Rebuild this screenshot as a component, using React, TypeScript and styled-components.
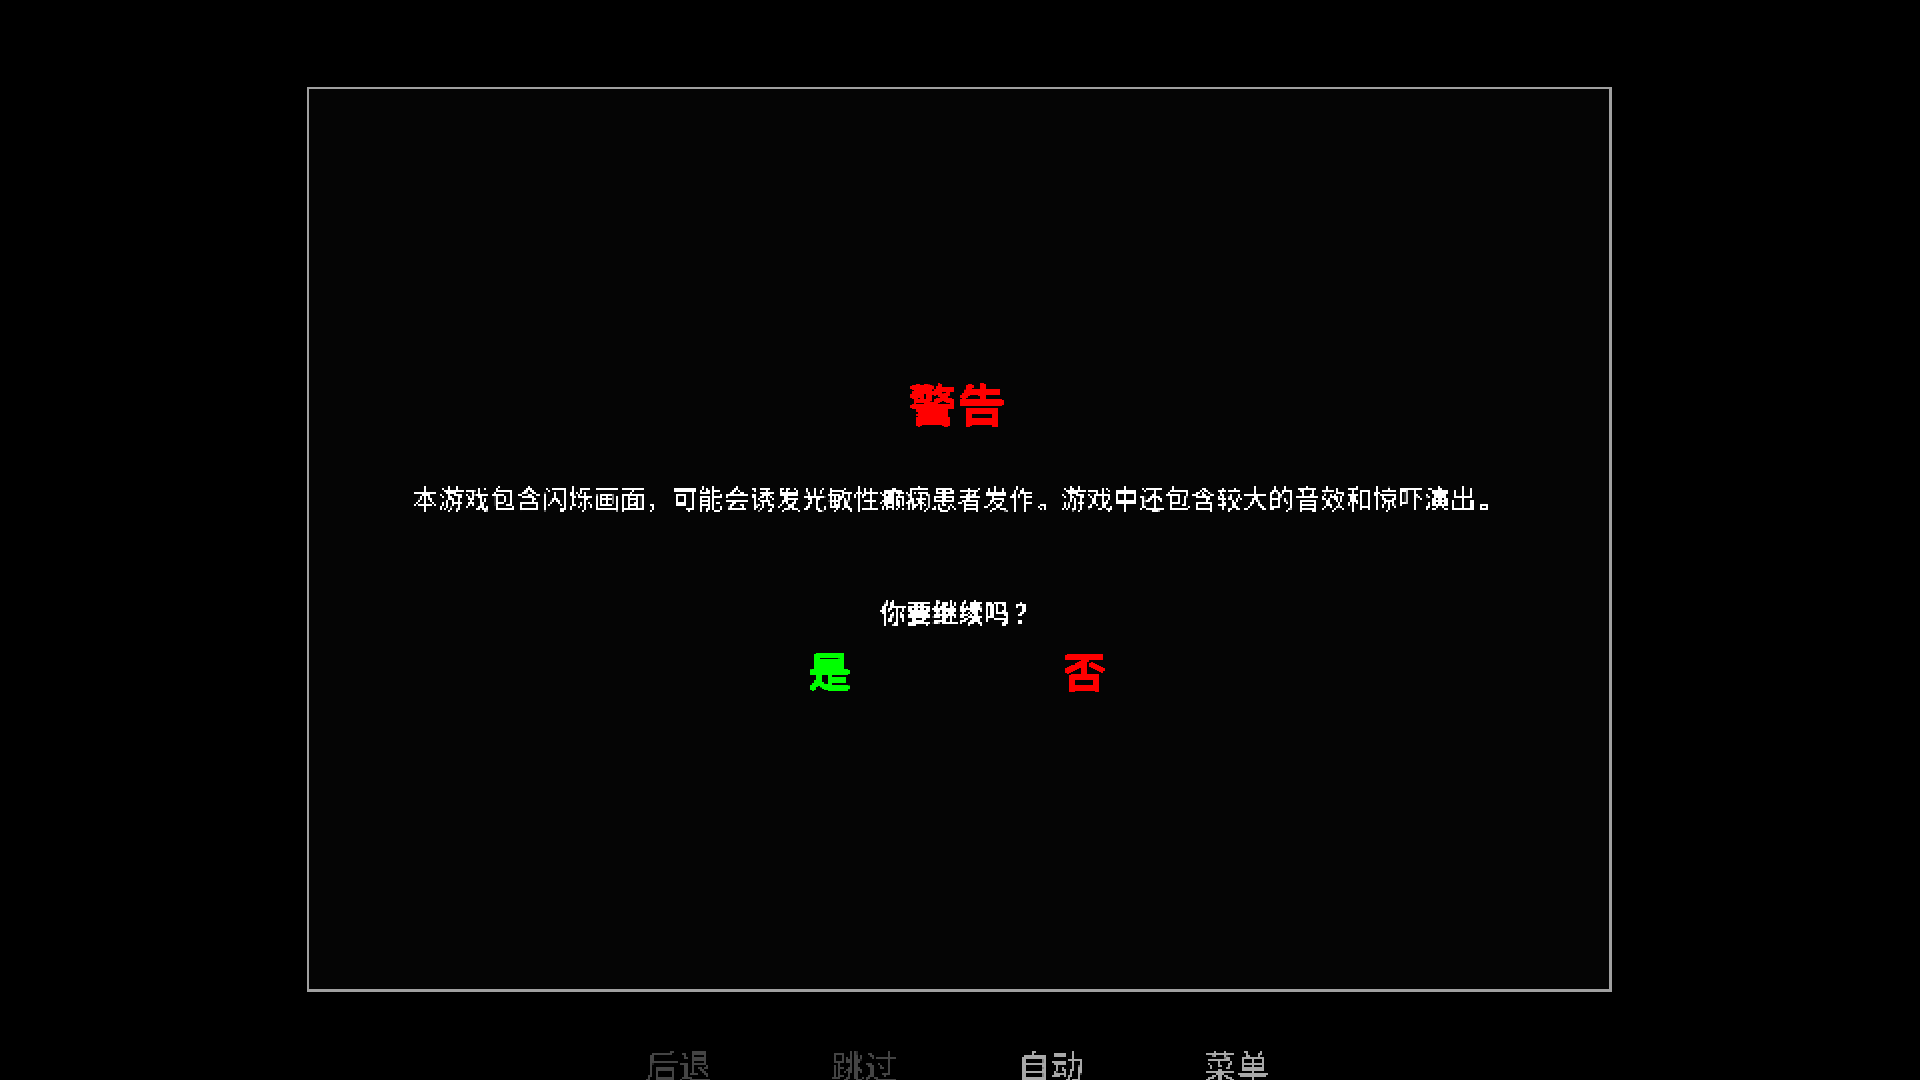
import React from "react";
import styled, { createGlobalStyle } from "styled-components";

const GlobalStyle = createGlobalStyle`
  html, body { margin: 0; padding: 0; background: #000; overflow: hidden; }
  * { box-sizing: border-box; }
`;

const Screen = styled.main`
  width: 1920px;
  height: 1080px;
  padding: 87px 308px 0 307px;
  display: flex;
  flex-direction: column;
  overflow: hidden;
  background: #000;
  font-family: "Noto Sans CJK SC", "Noto Sans", sans-serif;
`;

const Frame = styled.section`
  flex: none;
  height: 905px;
  border: solid #a0a0a0;
  border-width: 2px 3px 3px 2px;
  background: #050505;
  padding: 286px 4px 0 0;
  display: flex;
  flex-direction: column;
  align-items: center;
`;

const Title = styled.h1`
  margin: 0;
  font-size: 49px;
  line-height: 56px;
  height: 56px;
  font-weight: 700;
  color: #f00;
  transform: scaleY(0.9);
  filter: url(#bitmap);
`;

const Message = styled.p`
  margin: 49px 0 0;
  font-size: 26px;
  letter-spacing: -0.06px;
  line-height: 36px;
  font-weight: 400;
  white-space: nowrap;
  color: #fff;
  filter: url(#bitmap);
`;

const Stop = styled.span`
  margin: 0 -3px 0 3px;
  font-weight: 700;
`;

const Prompt = styled.p`
  margin: 78px 0 0;
  padding-left: 2px;
  font-size: 26px;
  line-height: 36px;
  font-weight: 700;
  white-space: nowrap;
  color: #fff;
  filter: url(#bitmap);
`;

const QuestionMark = styled.span`
  margin: 0 -4px 0 4px;
`;

const Choices = styled.div`
  margin-top: 13px;
  display: flex;
  gap: 211px;
`;

const Choice = styled.button<{ $color: string }>`
  width: 44px;
  height: 54px;
  padding: 0;
  border: 0;
  background: none;
  font: 700 44px/54px "Noto Sans CJK SC", "Noto Sans", sans-serif;
  color: ${(p) => p.$color};
  transform: scaleY(0.9);
  filter: url(#bitmap);
`;

const QuickMenu = styled.nav`
  flex: none;
  margin-top: 51px;
  padding-right: 4px;
  display: flex;
  justify-content: center;
  gap: 120px;
`;

const QuickButton = styled.button<{ $muted?: boolean }>`
  width: 66px;
  height: 44px;
  padding: 0;
  border: 0;
  background: none;
  white-space: nowrap;
  font: 400 33px/44px "Noto Sans CJK SC", "Noto Sans", sans-serif;
  color: ${(p) => (p.$muted ? "#444" : "#a8a8a8")};
  filter: url(#bitmap);
`;

const FilterDefs = styled.svg`
  position: absolute;
  width: 0;
  height: 0;
`;

/* Snaps glyph coverage to a 2px grid so type reads as a bitmap font. */
function BitmapFilter({ cutoff }: { cutoff: number }) {
  return (
    <filter
      id="bitmap"
      filterUnits="userSpaceOnUse"
      x="0"
      y="0"
      width="1200"
      height="60"
      colorInterpolationFilters="sRGB"
    >
      <feConvolveMatrix in="SourceGraphic" order={2} kernelMatrix="1 1 1 1" divisor={4} targetX={0} targetY={0} edgeMode="none" result="avg" />
      <feFlood x="0" y="0" width="1" height="1" floodColor="#fff" result="dot" />
      <feOffset in="dot" dx="0" dy="0" x="0" y="0" width="2" height="2" result="unit" />
      <feTile in="unit" result="grid" />
      <feComposite in="avg" in2="grid" operator="in" result="samples" />
      <feComponentTransfer in="samples" result="hard">
        <feFuncA type="linear" slope="40" intercept={-40 * cutoff} />
      </feComponentTransfer>
      <feOffset in="hard" dx="1" dy="0" result="right" />
      <feMerge result="row">
        <feMergeNode in="hard" />
        <feMergeNode in="right" />
      </feMerge>
      <feOffset in="row" dx="0" dy="1" result="below" />
      <feMerge>
        <feMergeNode in="row" />
        <feMergeNode in="below" />
      </feMerge>
    </filter>
  );
}

export default function App() {
  return (
    <>
      <GlobalStyle />
      <FilterDefs aria-hidden="true">
        <defs>
          <BitmapFilter cutoff={0.47} />
        </defs>
      </FilterDefs>
      <Screen lang="zh-CN">
        <Frame>
          <Title>警告</Title>
          <Message>
            本游戏包含闪烁画面，可能会诱发光敏性癫痫患者发作<Stop>。</Stop>游戏中还包含较大的音效和惊吓演出<Stop>。</Stop>
          </Message>
          <Prompt>
            你要继续吗<QuestionMark>？</QuestionMark>
          </Prompt>
          <Choices>
            <Choice $color="#0f0">是</Choice>
            <Choice $color="#f00">否</Choice>
          </Choices>
        </Frame>
        <QuickMenu>
          <QuickButton $muted>后退</QuickButton>
          <QuickButton $muted>跳过</QuickButton>
          <QuickButton>自动</QuickButton>
          <QuickButton>菜单</QuickButton>
        </QuickMenu>
      </Screen>
    </>
  );
}
